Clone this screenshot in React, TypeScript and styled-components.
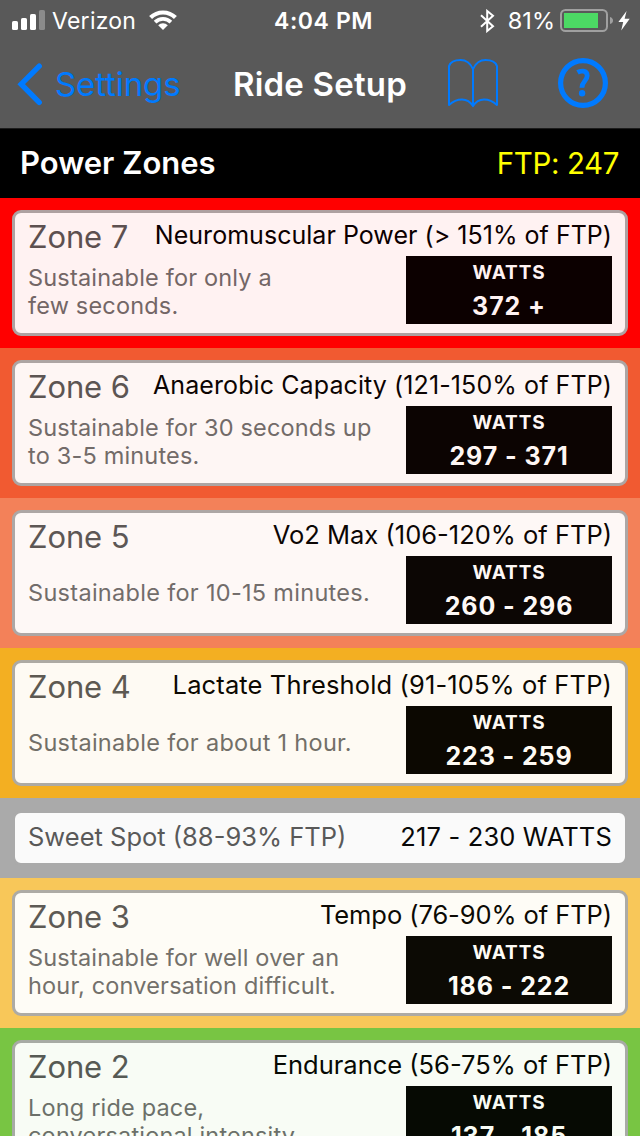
import React from 'react';
import styled, { createGlobalStyle } from 'styled-components';

const GlobalStyle = createGlobalStyle`
  html, body { margin: 0; padding: 0; }
  body {
    width: 640px;
    height: 1136px;
    overflow: hidden;
    background: #000;
    font-family: Inter, "Liberation Sans", sans-serif;
    font-kerning: normal;
  }
`;

const Screen = styled.div`
  width: 640px;
  height: 1136px;
  overflow: hidden;
  display: flex;
  flex-direction: column;
`;

const TopArea = styled.header`
  flex: none;
  height: 128px;
  background: #595959;
  color: #fff;
`;

const StatusBar = styled.div`
  height: 41px;
  display: grid;
  grid-template-columns: 274px 1fr auto;
  grid-template-rows: 41px;
  align-items: center;
  line-height: 41px;
  white-space: nowrap;
`;

const StatusGroup = styled.div<{ $start?: number; $end?: number }>`
  height: 41px;
  display: flex;
  align-items: center;
  padding-left: ${(p) => p.$start ?? 0}px;
  padding-right: ${(p) => p.$end ?? 0}px;
`;

const Carrier = styled.span`
  width: 84px;
  margin: 0 13px 0 6px;
  padding-top: 1px;
  font-size: 23px;
  letter-spacing: 0.25px;
`;

const Clock = styled.span`
  padding-top: 1px;
  font-size: 23px;
  font-weight: 600;
  letter-spacing: 0.6px;
`;

const BatteryLevel = styled.span`
  margin: 0 5px 0 13px;
  font-size: 23.5px;
  letter-spacing: 0;
`;

const NavBar = styled.nav`
  height: 87px;
  display: flex;
  align-items: center;
  line-height: 87px;
  white-space: nowrap;
`;

const BackLink = styled.div`
  display: flex;
  align-items: center;
  width: 216px;
  padding-left: 17px;
  color: #007aff;
  font-size: 33px;
  letter-spacing: -0.1px;
`;

const BackLabel = styled.span`
  margin-left: 12px;
`;

const NavTitle = styled.h1`
  margin: 0;
  width: 214px;
  font-size: 33px;
  font-weight: 600;
  letter-spacing: 0.2px;
`;

const NavIcon = styled.div<{ $gap?: number }>`
  display: flex;
  margin-left: ${(p) => p.$gap ?? 0}px;
  padding-bottom: 3px;
`;

const BoltSlot = styled.div`
  display: flex;
  margin-left: 4px;
`;

const SectionHeader = styled.div`
  flex: none;
  box-sizing: border-box;
  height: 70px;
  padding: 0 21px 2px 20px;
  display: flex;
  justify-content: space-between;
  align-items: center;
  background: #000;
  border-top: 1px solid #1c1c1c;
  color: #fff;
`;

const SectionTitle = styled.h2`
  margin: 0;
  font-size: 31px;
  font-weight: 600;
  letter-spacing: 0;
`;

const FtpValue = styled.span`
  padding-top: 1px;
  font-size: 29.5px;
  letter-spacing: -0.4px;
  color: #ffff00;
`;

const Band = styled.section<{ $color: string; $height: number }>`
  flex: none;
  box-sizing: border-box;
  height: ${(p) => p.$height}px;
  padding: 12px;
  background: ${(p) => p.$color};
`;

const Card = styled.div`
  box-sizing: border-box;
  height: 126px;
  padding: 0 13px;
  background: #fff;
  border: 3px solid #aaa;
  border-radius: 9px;
  opacity: 0.95;
  white-space: nowrap;
`;

const CardTop = styled.div`
  height: 43px;
  display: flex;
  justify-content: space-between;
`;

const ZoneLabel = styled.span`
  line-height: 47px;
  font-size: 31px;
  letter-spacing: -0.1px;
  color: #555;
`;

const ZoneName = styled.span<{ $size: number; $tracking: number }>`
  line-height: 44px;
  font-size: ${(p) => p.$size}px;
  letter-spacing: ${(p) => p.$tracking}px;
  color: #000;
`;

const CardBody = styled.div`
  display: flex;
  justify-content: space-between;
`;

const Description = styled.p<{ $single: boolean }>`
  margin: 0;
  height: ${(p) => (p.$single ? 74 : 72)}px;
  display: flex;
  align-items: center;
  line-height: 28px;
  font-size: 23.5px;
  letter-spacing: ${(p) => (p.$single ? 0.3 : 0.18)}px;
  color: #6c6c6c;
  white-space: pre;
`;

const WattsBox = styled.div`
  width: 206px;
  height: 68px;
  background: #000;
  color: #fff;
  text-align: center;
`;

const WattsLabel = styled.div`
  line-height: 34px;
  font-size: 19px;
  font-weight: 650;
  letter-spacing: 0.9px;
`;

const WattsRange = styled.div`
  line-height: 33px;
  font-size: 25px;
  font-weight: 700;
  letter-spacing: 0.9px;
`;

const SweetCard = styled(Card)`
  height: 56px;
  display: flex;
  justify-content: space-between;
  line-height: 48px;
  font-size: 25.5px;
`;

const SweetLabel = styled.span`
  color: #555;
`;

const SweetRange = styled.span`
  color: #000;
  letter-spacing: 0.15px;
`;

type Zone = {
  label: string;
  name: string;
  size: number;
  tracking: number;
  text: string;
  watts: string;
  color: string;
};

const upperZones: Zone[] = [
  { label: 'Zone 7', name: 'Neuromuscular Power (> 151% of FTP)', size: 25, tracking: 0.03, text: 'Sustainable for only a\nfew seconds.', watts: '372 +', color: '#ff0000' },
  { label: 'Zone 6', name: 'Anaerobic Capacity (121-150% of FTP)', size: 25, tracking: 0.1, text: 'Sustainable for 30 seconds up\nto 3-5 minutes.', watts: '297 - 371', color: '#f15a31' },
  { label: 'Zone 5', name: 'Vo2 Max (106-120% of FTP)', size: 25.5, tracking: 0, text: 'Sustainable for 10-15 minutes.', watts: '260 - 296', color: '#f38159' },
  { label: 'Zone 4', name: 'Lactate Threshold (91-105% of FTP)', size: 25.5, tracking: 0.13, text: 'Sustainable for about 1 hour.', watts: '223 - 259', color: '#f3af22' },
];

const lowerZones: Zone[] = [
  { label: 'Zone 3', name: 'Tempo (76-90% of FTP)', size: 25.5, tracking: -0.08, text: 'Sustainable for well over an\nhour, conversation difficult.', watts: '186 - 222', color: '#f8c759' },
  { label: 'Zone 2', name: 'Endurance (56-75% of FTP)', size: 25.5, tracking: 0, text: 'Long ride pace,\nconversational intensity.', watts: '137 - 185', color: '#78c543' },
];

const ZoneBand = ({ zone }: { zone: Zone }) => (
  <Band $color={zone.color} $height={150}>
    <Card>
      <CardTop>
        <ZoneLabel>{zone.label}</ZoneLabel>
        <ZoneName $size={zone.size} $tracking={zone.tracking}>{zone.name}</ZoneName>
      </CardTop>
      <CardBody>
        <Description $single={!zone.text.includes('\n')}>{zone.text}</Description>
        <WattsBox>
          <WattsLabel>WATTS</WattsLabel>
          <WattsRange>{zone.watts}</WattsRange>
        </WattsBox>
      </CardBody>
    </Card>
  </Band>
);

const SignalIcon = () => (
  <svg width="34" height="21" viewBox="0 0 34 21" fill="#fff">
    <rect x="0" y="11" width="6" height="9" rx="1.6" />
    <rect x="9" y="8" width="6" height="12" rx="1.6" />
    <rect x="18" y="4" width="6" height="16" rx="1.6" />
    <rect x="27" y="0" width="6" height="20" rx="1.6" fill="#8b8b8b" />
  </svg>
);

const WifiIcon = () => (
  <svg width="28" height="21" viewBox="0 0 28 21" fill="none" stroke="#fff">
    <path d="M1.6 7.6A17.6 17.6 0 0 1 26.4 7.6" strokeWidth="4.2" />
    <path d="M6.1 12.1A11.2 11.2 0 0 1 21.9 12.1" strokeWidth="3.8" />
    <path d="M14 20L9.2 15.3A6.8 6.8 0 0 1 18.8 15.3Z" fill="#fff" stroke="none" />
  </svg>
);

const BluetoothIcon = () => (
  <svg width="15" height="24" viewBox="0 0 15 24" fill="none" stroke="#fff" strokeWidth="2">
    <path d="M1 6.2L13 17.2L7.2 22V2L13 6.8L1 17.8" />
  </svg>
);

const BatteryIcon = () => (
  <svg width="54" height="23" viewBox="0 0 54 23">
    <rect x="1" y="1" width="46" height="21" rx="4.5" fill="none" stroke="#a0a0a0" strokeWidth="2" />
    <rect x="4" y="4" width="34" height="15" fill="#4cd964" />
    <path d="M50 8Q53 9 53 11.5T50 15Z" fill="#a0a0a0" />
  </svg>
);

const BoltIcon = () => (
  <svg width="12" height="20" viewBox="0 0 12 20" fill="#fff">
    <path d="M8.6 0L0.4 11H5.2L3.2 19.6L11.7 7.8H6.6Z" />
  </svg>
);

const ChevronIcon = () => (
  <svg width="26" height="44" viewBox="0 0 26 44" fill="none" stroke="#007aff" strokeWidth="5.4" strokeLinecap="round">
    <path d="M22.2 3.2L4.2 21.2L22.2 39.4" />
  </svg>
);

const BookIcon = () => (
  <svg width="52" height="50" viewBox="0 -0.6 52 50" fill="none" stroke="#007aff" strokeWidth="2" strokeLinejoin="round">
    <path d="M26 10.5C23 4 18.5 1.5 13.5 1.5C8 1.5 3.5 3.5 2 7.5V46.3C5 43.5 9 40.8 15 40.8C20 40.8 23 42.5 26 47.5C29 42.5 32 40.8 37 40.8C43 40.8 47 43.5 50 46.3V7.5C48.5 3.5 44 1.5 38.5 1.5C33.5 1.5 29 4 26 10.5V47.5" />
  </svg>
);

const HelpIcon = () => (
  <svg width="50" height="50" viewBox="0 0 50 50" fill="none" stroke="#007aff">
    <circle cx="25" cy="25" r="22.4" strokeWidth="5.2" />
    <path d="M19.5 14.3C22.5 12.6 29.2 12 29.2 17.8C29.2 22.8 23.9 23.4 23.9 29.8" strokeWidth="4.8" />
    <circle cx="24.1" cy="35.3" r="3.2" fill="#007aff" stroke="none" />
  </svg>
);

export default function App() {
  return (
    <>
      <GlobalStyle />
      <Screen>
        <TopArea>
          <StatusBar>
            <StatusGroup $start={12}>
              <SignalIcon />
              <Carrier>Verizon</Carrier>
              <WifiIcon />
            </StatusGroup>
            <Clock>4:04 PM</Clock>
            <StatusGroup $end={10}>
              <BluetoothIcon />
              <BatteryLevel>81%</BatteryLevel>
              <BatteryIcon />
              <BoltSlot>
                <BoltIcon />
              </BoltSlot>
            </StatusGroup>
          </StatusBar>
          <NavBar>
            <BackLink>
              <ChevronIcon />
              <BackLabel>Settings</BackLabel>
            </BackLink>
            <NavTitle>Ride Setup</NavTitle>
            <NavIcon>
              <BookIcon />
            </NavIcon>
            <NavIcon $gap={59}>
              <HelpIcon />
            </NavIcon>
          </NavBar>
        </TopArea>
        <SectionHeader>
          <SectionTitle>Power Zones</SectionTitle>
          <FtpValue>FTP: 247</FtpValue>
        </SectionHeader>
        {upperZones.map((zone) => (
          <ZoneBand key={zone.label} zone={zone} />
        ))}
        <Band $color="#aaaaaa" $height={80}>
          <SweetCard>
            <SweetLabel>Sweet Spot (88-93% FTP)</SweetLabel>
            <SweetRange>217 - 230 WATTS</SweetRange>
          </SweetCard>
        </Band>
        {lowerZones.map((zone) => (
          <ZoneBand key={zone.label} zone={zone} />
        ))}
      </Screen>
    </>
  );
}
